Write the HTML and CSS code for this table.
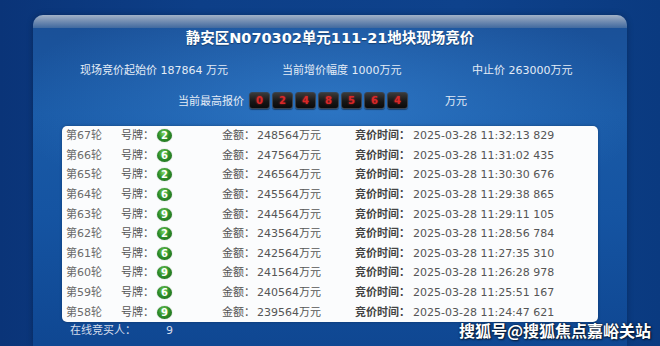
FILE: index.html
```html
<!DOCTYPE html>
<html lang="zh-CN">
<head>
<meta charset="utf-8">
<link rel="stylesheet" href="styles.css">
</head>
<body>
<div class="stage">
  <div class="panel">
    <div class="panel-head"></div>
    <h1 class="title">静安区N070302单元111-21地块现场竞价</h1>
    <div class="info">
      <span>现场竞价起始价 187864 万元</span>
      <span>当前增价幅度 1000万元</span>
      <span>中止价 263000万元</span>
    </div>
    <div class="maxbid">
      <span class="mb-label">当前最高报价</span>
      <div class="digits">
        <span class="d">0</span><span class="d">2</span><span class="d">4</span><span class="d">8</span><span class="d">5</span><span class="d">6</span><span class="d">4</span>
      </div>
      <span class="mb-unit">万元</span>
    </div>
    <div class="card">
      <div class="row"><span class="rd">第67轮</span><span class="lb">号牌：</span><span class="badge">2</span><span class="lb">金额：</span><span class="val">248564万元</span><span class="tl">竞价时间：</span><span class="tm">2025-03-28 11:32:13 829</span></div>
      <div class="row"><span class="rd">第66轮</span><span class="lb">号牌：</span><span class="badge">6</span><span class="lb">金额：</span><span class="val">247564万元</span><span class="tl">竞价时间：</span><span class="tm">2025-03-28 11:31:02 435</span></div>
      <div class="row"><span class="rd">第65轮</span><span class="lb">号牌：</span><span class="badge">2</span><span class="lb">金额：</span><span class="val">246564万元</span><span class="tl">竞价时间：</span><span class="tm">2025-03-28 11:30:30 676</span></div>
      <div class="row"><span class="rd">第64轮</span><span class="lb">号牌：</span><span class="badge">6</span><span class="lb">金额：</span><span class="val">245564万元</span><span class="tl">竞价时间：</span><span class="tm">2025-03-28 11:29:38 865</span></div>
      <div class="row"><span class="rd">第63轮</span><span class="lb">号牌：</span><span class="badge">9</span><span class="lb">金额：</span><span class="val">244564万元</span><span class="tl">竞价时间：</span><span class="tm">2025-03-28 11:29:11 105</span></div>
      <div class="row"><span class="rd">第62轮</span><span class="lb">号牌：</span><span class="badge">2</span><span class="lb">金额：</span><span class="val">243564万元</span><span class="tl">竞价时间：</span><span class="tm">2025-03-28 11:28:56 784</span></div>
      <div class="row"><span class="rd">第61轮</span><span class="lb">号牌：</span><span class="badge">6</span><span class="lb">金额：</span><span class="val">242564万元</span><span class="tl">竞价时间：</span><span class="tm">2025-03-28 11:27:35 310</span></div>
      <div class="row"><span class="rd">第60轮</span><span class="lb">号牌：</span><span class="badge">9</span><span class="lb">金额：</span><span class="val">241564万元</span><span class="tl">竞价时间：</span><span class="tm">2025-03-28 11:26:28 978</span></div>
      <div class="row"><span class="rd">第59轮</span><span class="lb">号牌：</span><span class="badge">6</span><span class="lb">金额：</span><span class="val">240564万元</span><span class="tl">竞价时间：</span><span class="tm">2025-03-28 11:25:51 167</span></div>
      <div class="row"><span class="rd">第58轮</span><span class="lb">号牌：</span><span class="badge">9</span><span class="lb">金额：</span><span class="val">239564万元</span><span class="tl">竞价时间：</span><span class="tm">2025-03-28 11:24:47 621</span></div>
    </div>
    <div class="footer"><span class="ft-label">在线竞买人：</span><span class="ft-num">9</span></div>
  </div>
</div>
<div class="watermark">搜狐号@搜狐焦点嘉峪关站</div>
</body>
</html>
```

FILE: styles.css
```css
html, body {
  margin: 0;
  padding: 0;
}
body {
  width: 660px;
  height: 346px;
  overflow: hidden;
  position: relative;
  font-family: "DejaVu Sans", "Noto Sans CJK SC", sans-serif;
  background:
    linear-gradient(90deg, #0a3478 0%, #0d3f88 30%, #0e428c 70%, #0a3a80 100%);
}
.stage {
  padding: 15px 33px 0 33px;
}
.panel {
  height: 331px;
  border-radius: 10px 10px 0 0;
  background:
    radial-gradient(ellipse 320px 120px at 50% 90px, rgba(60,140,220,0.55), rgba(60,140,220,0) 100%),
    linear-gradient(180deg, #1a4f96 0%, #1a5aa6 30%, #1554a2 60%, #0f4792 100%);
  box-shadow: 0 0 6px rgba(0,0,0,0.25);
}
.panel-head {
  height: 13px;
  border-radius: 10px 10px 0 0;
  background: linear-gradient(180deg, #a2b2c8 0%, #7b93b5 40%, #40699f 100%);
}
.title {
  margin: 0;
  height: 20px;
  line-height: 20px;
  text-align: center;
  color: #ffffff;
  font-size: 14.5px;
  font-weight: bold;
  text-shadow: 0 1px 1px rgba(0,0,0,0.35);
}
.info {
  margin-top: 13px;
  height: 20px;
  line-height: 20px;
  display: grid;
  grid-template-columns: 202px 190px auto;
  padding-left: 47px;
  color: #e4ecf6;
  font-size: 11px;
  white-space: nowrap;
}
.maxbid {
  margin-top: 9px;
  height: 20px;
  display: flex;
  align-items: center;
  padding-left: 145px;
  color: #e4ecf6;
  font-size: 11px;
}
.digits {
  display: flex;
  gap: 2px;
  margin-left: 5px;
}
.d {
  width: 19px;
  height: 15px;
  border: 1px solid #3a4350;
  border-radius: 3px;
  background: linear-gradient(180deg, #3a3a3a 0%, #171717 55%, #0b0b0b 100%);
  color: #d82828;
  font-size: 10px;
  font-weight: bold;
  line-height: 15px;
  text-align: center;
  text-shadow: 0 0 2px rgba(255,40,40,0.6);
  box-shadow: 0 1px 1px rgba(0,0,0,0.4);
}
.mb-unit {
  margin-left: 37px;
}
.card {
  margin: 16px 0 0 29px;
  width: 536px;
  height: 196px;
  background: #fbfcfd;
  border-radius: 5px;
  box-shadow: 0 0 3px rgba(0,0,0,0.3);
  display: grid;
  grid-template-rows: repeat(10, 1fr);
  color: #5a5a5a;
  font-size: 11px;
  line-height: 13px;
}
.row {
  display: grid;
  grid-template-columns: 55px 36px 65px 35px 98px 58px auto;
  align-items: center;
  padding-left: 4px;
  white-space: nowrap;
}
.rd {
  color: #6a6a6a;
}
.lb {
  color: #555;
}
.badge {
  width: 15px;
  height: 13px;
  border-radius: 50%;
  background: radial-gradient(ellipse at 45% 35%, #7fd860 0%, #2f8f2a 45%, #176317 100%);
  color: #fff;
  font-size: 10px;
  font-weight: bold;
  line-height: 13px;
  text-align: center;
  box-shadow: 0 0 1px rgba(0,60,0,0.6);
}
.val {
  color: #555;
}
.tl {
  color: #444;
  font-weight: bold;
}
.tm {
  color: #555;
}
.footer {
  height: 18px;
  line-height: 18px;
  padding-left: 37px;
  color: #d4dcea;
  font-size: 11px;
  display: flex;
}
.ft-num {
  margin-left: 30px;
}
.watermark {
  position: absolute;
  left: 459px;
  top: 322px;
  font-family: "Noto Sans CJK SC", sans-serif;
  font-size: 16px;
  font-weight: bold;
  color: #ffffff;
  line-height: 16px;
  text-shadow: 0 0 2px rgba(0,0,0,0.8), 1px 1px 2px rgba(0,0,0,0.6);
  white-space: nowrap;
}
```
